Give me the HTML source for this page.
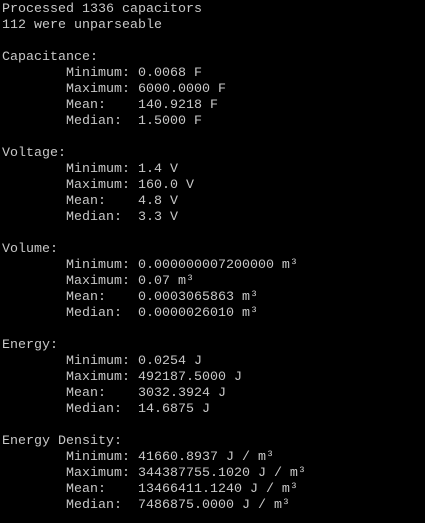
<!DOCTYPE html>
<html><head><meta charset="utf-8"><style>
html,body{margin:0;padding:0;background:#000;width:425px;height:523px;overflow:hidden}
pre{margin:0;position:absolute;left:2px;top:2px;font-family:"Liberation Mono",monospace;font-size:13.33px;line-height:16px;color:#c8c8c8}
</style></head><body><pre>Processed 1336 capacitors
112 were unparseable

Capacitance:
        Minimum: 0.0068 F
        Maximum: 6000.0000 F
        Mean:    140.9218 F
        Median:  1.5000 F

Voltage:
        Minimum: 1.4 V
        Maximum: 160.0 V
        Mean:    4.8 V
        Median:  3.3 V

Volume:
        Minimum: 0.000000007200000 m³
        Maximum: 0.07 m³
        Mean:    0.0003065863 m³
        Median:  0.0000026010 m³

Energy:
        Minimum: 0.0254 J
        Maximum: 492187.5000 J
        Mean:    3032.3924 J
        Median:  14.6875 J

Energy Density:
        Minimum: 41660.8937 J / m³
        Maximum: 344387755.1020 J / m³
        Mean:    13466411.1240 J / m³
        Median:  7486875.0000 J / m³</pre></body></html>
